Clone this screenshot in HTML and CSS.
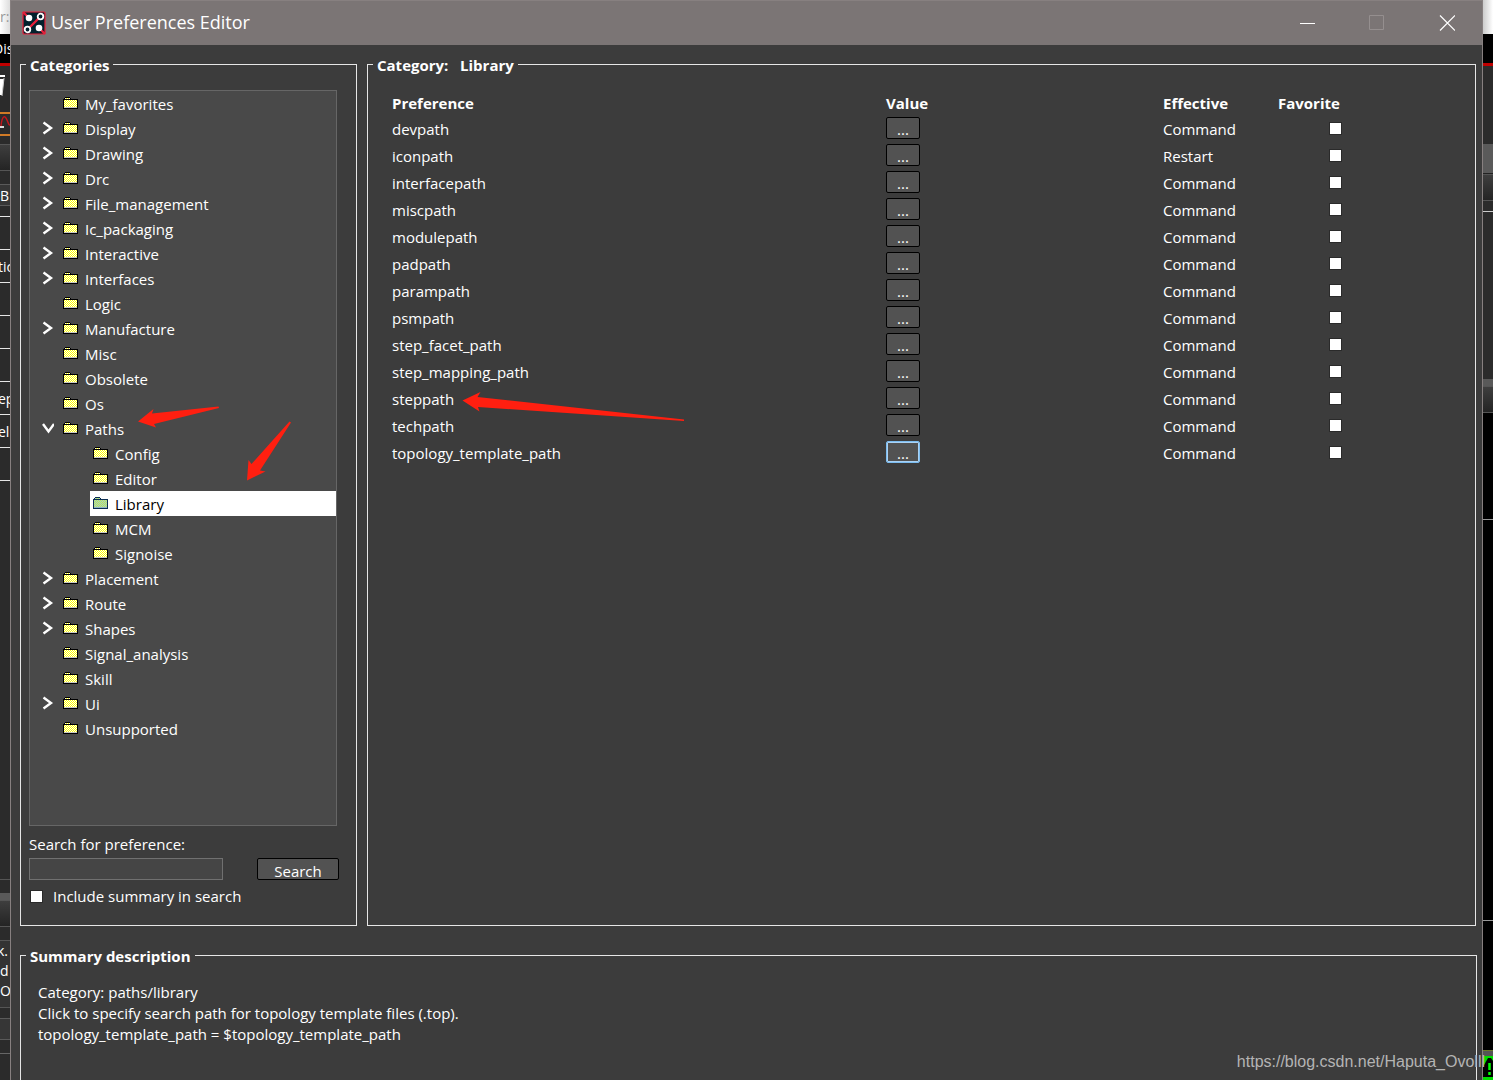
FILE: index.html
```html
<!DOCTYPE html>
<html lang="en">
<head>
<meta charset="utf-8">
<title>User Preferences Editor</title>
<link rel="stylesheet" href="styles.css">
</head>
<body>
<svg class="defs" width="0" height="0" aria-hidden="true">
  <defs>
    <pattern id="dither" width="2" height="2" patternUnits="userSpaceOnUse">
      <rect width="2" height="2" fill="#fff"/><rect width="1" height="1" fill="#ff0"/><rect x="1" y="1" width="1" height="1" fill="#ff0"/>
    </pattern>
    <pattern id="dither-sel" width="2" height="2" patternUnits="userSpaceOnUse">
      <rect width="2" height="2" fill="#a0d0d0"/><rect width="1" height="1" fill="#c4e84c"/><rect x="1" y="1" width="1" height="1" fill="#c4e84c"/>
    </pattern>
    <symbol id="folder" viewBox="0 0 15 12">
      <path d="M2 0h5v1h1v1h7v10H0V2h1V1h1z" fill="#000"/>
      <path d="M2 1h5v1H2zM1 3h13v7H1z" fill="url(#dither)"/>
      <path d="M1 10h13v1H1z" fill="#c8c8c8"/>
    </symbol>
    <symbol id="folder-sel" viewBox="0 0 15 12">
      <path d="M2 0h5v1h1v1h7v10H0V2h1V1h1z" fill="#0b2e52"/>
      <path d="M2 1h5v1H2zM1 3h13v7H1z" fill="url(#dither-sel)"/>
      <path d="M1 10h13v1H1z" fill="#8fb4c8"/>
    </symbol>
    <symbol id="closed" viewBox="0 0 12 14">
      <path d="M1.500 1.500L9 7L1.500 12.500" fill="none" stroke="#fff" stroke-width="2.400"/>
    </symbol>
    <symbol id="open" viewBox="0 0 12 14">
      <path d="M1 3L6.500 10.500L12 3" fill="none" stroke="#fff" stroke-width="2.400"/>
    </symbol>
  </defs>
</svg>
<div class="screen">
  <div class="backdrop left" aria-hidden="true">
    <div class="strip caption">r:</div>
    <div class="strip menubar">Dis</div>
    <div class="strip red"></div>
    <div class="strip toolbar">
      <svg width="10" height="46" viewBox="0 0 10 46"><path d="M0 9h5v2H0zM0 13h4L2 29H0" fill="#fff"/><path d="M4 12L2 30" stroke="#ccc" stroke-width="1"/></svg>
    </div>
    <div class="strip selected">
      <svg width="10" height="20" viewBox="0 0 10 20"><path d="M0 13h4" stroke="#ddd" stroke-width="2"/><path d="M1 12C2 1 5 1 7 6S9 11 10 11" fill="none" stroke="#c4161c" stroke-width="1.500"/></svg>
    </div>
    <div class="strip gap8"></div>
    <div class="strip bar"></div>
    <div class="strip gap13"></div>
    <div class="strip box">B</div>
    <div class="strip gap10"></div>
    <div class="strip cell"></div>
    <div class="strip cell">tic</div>
    <div class="strip cell"></div>
    <div class="strip cell"></div>
    <div class="strip cell"></div>
    <div class="strip cell">ep</div>
    <div class="strip cell">eli</div>
    <div class="strip cell"></div>
    <div class="strip cell grow"></div>
    <div class="strip lower"></div>
    <div class="strip divider"></div>
    <div class="strip bar"></div>
    <div class="strip gap13"></div>
    <div class="strip log">k.<br>d t<br>OI</div>
    <div class="strip gap10"></div>
    <div class="strip box"></div>
    <div class="strip gap13"></div>
    <div class="strip status"></div>
  </div>

  <main class="dialog">
    <header class="titlebar">
      <svg class="logo" width="24" height="24" viewBox="0 0 24 24" aria-hidden="true">
        <rect x="1" y="1" width="22" height="22" rx="1" fill="#02212d" stroke="#e8203a" stroke-width="1.200"/>
        <path d="M1 1L7 7M6 18L18 6M17 17L23 23" stroke="#e8203a" stroke-width="2.400"/>
        <circle cx="7" cy="7" r="3.300" fill="#fff"/><circle cx="17" cy="17" r="3.300" fill="#fff"/>
        <circle cx="18.500" cy="5.500" r="2.800" fill="#02212d" stroke="#fff" stroke-width="1.800"/>
        <circle cx="5.500" cy="18.500" r="2.800" fill="#02212d" stroke="#fff" stroke-width="1.800"/>
      </svg>
      <h1>User Preferences Editor</h1>
      <button class="winbtn" aria-label="Minimize"><svg width="16" height="16" viewBox="0 0 16 16"><path d="M1 8.500h15" stroke="#fff"/></svg></button>
      <button class="winbtn" aria-label="Maximize" disabled><svg width="16" height="16" viewBox="0 0 16 16"><path d="M.5 .5h14v14H.5z" fill="none" stroke="#958f8f"/></svg></button>
      <button class="winbtn" aria-label="Close"><svg width="16" height="16" viewBox="0 0 16 16"><path d="M1 .5l15 15M16 .5l-15 15" stroke="#fff" stroke-width="1.200"/></svg></button>
    </header>

    <div class="content">
      <div class="panels">
        <fieldset class="group categories">
          <legend>Categories</legend>
          <ul class="tree">
            <li><div class="row"><span class="toggle"></span><span class="item"><svg class="folder"><use href="#folder"/></svg>My_favorites</span></div></li>
            <li><div class="row"><button class="toggle" aria-label="Expand Display"><svg><use href="#closed"/></svg></button><span class="item"><svg class="folder"><use href="#folder"/></svg>Display</span></div></li>
            <li><div class="row"><button class="toggle" aria-label="Expand Drawing"><svg><use href="#closed"/></svg></button><span class="item"><svg class="folder"><use href="#folder"/></svg>Drawing</span></div></li>
            <li><div class="row"><button class="toggle" aria-label="Expand Drc"><svg><use href="#closed"/></svg></button><span class="item"><svg class="folder"><use href="#folder"/></svg>Drc</span></div></li>
            <li><div class="row"><button class="toggle" aria-label="Expand File_management"><svg><use href="#closed"/></svg></button><span class="item"><svg class="folder"><use href="#folder"/></svg>File_management</span></div></li>
            <li><div class="row"><button class="toggle" aria-label="Expand Ic_packaging"><svg><use href="#closed"/></svg></button><span class="item"><svg class="folder"><use href="#folder"/></svg>Ic_packaging</span></div></li>
            <li><div class="row"><button class="toggle" aria-label="Expand Interactive"><svg><use href="#closed"/></svg></button><span class="item"><svg class="folder"><use href="#folder"/></svg>Interactive</span></div></li>
            <li><div class="row"><button class="toggle" aria-label="Expand Interfaces"><svg><use href="#closed"/></svg></button><span class="item"><svg class="folder"><use href="#folder"/></svg>Interfaces</span></div></li>
            <li><div class="row"><span class="toggle"></span><span class="item"><svg class="folder"><use href="#folder"/></svg>Logic</span></div></li>
            <li><div class="row"><button class="toggle" aria-label="Expand Manufacture"><svg><use href="#closed"/></svg></button><span class="item"><svg class="folder"><use href="#folder"/></svg>Manufacture</span></div></li>
            <li><div class="row"><span class="toggle"></span><span class="item"><svg class="folder"><use href="#folder"/></svg>Misc</span></div></li>
            <li><div class="row"><span class="toggle"></span><span class="item"><svg class="folder"><use href="#folder"/></svg>Obsolete</span></div></li>
            <li><div class="row"><span class="toggle"></span><span class="item"><svg class="folder"><use href="#folder"/></svg>Os</span></div></li>
            <li><div class="row"><button class="toggle" aria-label="Collapse Paths"><svg><use href="#open"/></svg></button><span class="item"><svg class="folder"><use href="#folder"/></svg>Paths</span></div>
              <ul class="children">
                <li><div class="row"><span class="item"><svg class="folder"><use href="#folder"/></svg>Config</span></div></li>
                <li><div class="row"><span class="item"><svg class="folder"><use href="#folder"/></svg>Editor</span></div></li>
                <li><div class="row current"><span class="item"><svg class="folder"><use href="#folder-sel"/></svg>Library</span></div></li>
                <li><div class="row"><span class="item"><svg class="folder"><use href="#folder"/></svg>MCM</span></div></li>
                <li><div class="row"><span class="item"><svg class="folder"><use href="#folder"/></svg>Signoise</span></div></li>
              </ul>
            </li>
            <li><div class="row"><button class="toggle" aria-label="Expand Placement"><svg><use href="#closed"/></svg></button><span class="item"><svg class="folder"><use href="#folder"/></svg>Placement</span></div></li>
            <li><div class="row"><button class="toggle" aria-label="Expand Route"><svg><use href="#closed"/></svg></button><span class="item"><svg class="folder"><use href="#folder"/></svg>Route</span></div></li>
            <li><div class="row"><button class="toggle" aria-label="Expand Shapes"><svg><use href="#closed"/></svg></button><span class="item"><svg class="folder"><use href="#folder"/></svg>Shapes</span></div></li>
            <li><div class="row"><span class="toggle"></span><span class="item"><svg class="folder"><use href="#folder"/></svg>Signal_analysis</span></div></li>
            <li><div class="row"><span class="toggle"></span><span class="item"><svg class="folder"><use href="#folder"/></svg>Skill</span></div></li>
            <li><div class="row"><button class="toggle" aria-label="Expand Ui"><svg><use href="#closed"/></svg></button><span class="item"><svg class="folder"><use href="#folder"/></svg>Ui</span></div></li>
            <li><div class="row"><span class="toggle"></span><span class="item"><svg class="folder"><use href="#folder"/></svg>Unsupported</span></div></li>
          </ul>
          <label class="search-label" for="search">Search for preference:</label>
          <div class="search-row">
            <input type="text" id="search">
            <button class="btn search-btn">Search</button>
          </div>
          <label class="include"><input type="checkbox">Include summary in search</label>
        </fieldset>

        <fieldset class="group library">
          <legend>Category: &nbsp; Library</legend>
          <table>
            <thead>
              <tr><th class="pref">Preference</th><th class="value">Value</th><th class="effective">Effective</th><th class="favorite">Favorite</th></tr>
            </thead>
            <tbody>
              <tr><td>devpath</td><td class="val"><button class="btn more">...</button></td><td>Command</td><td class="fav"><input type="checkbox" aria-label="Favorite devpath"></td></tr>
              <tr><td>iconpath</td><td class="val"><button class="btn more">...</button></td><td>Restart</td><td class="fav"><input type="checkbox" aria-label="Favorite iconpath"></td></tr>
              <tr><td>interfacepath</td><td class="val"><button class="btn more">...</button></td><td>Command</td><td class="fav"><input type="checkbox" aria-label="Favorite interfacepath"></td></tr>
              <tr><td>miscpath</td><td class="val"><button class="btn more">...</button></td><td>Command</td><td class="fav"><input type="checkbox" aria-label="Favorite miscpath"></td></tr>
              <tr><td>modulepath</td><td class="val"><button class="btn more">...</button></td><td>Command</td><td class="fav"><input type="checkbox" aria-label="Favorite modulepath"></td></tr>
              <tr><td>padpath</td><td class="val"><button class="btn more">...</button></td><td>Command</td><td class="fav"><input type="checkbox" aria-label="Favorite padpath"></td></tr>
              <tr><td>parampath</td><td class="val"><button class="btn more">...</button></td><td>Command</td><td class="fav"><input type="checkbox" aria-label="Favorite parampath"></td></tr>
              <tr><td>psmpath</td><td class="val"><button class="btn more">...</button></td><td>Command</td><td class="fav"><input type="checkbox" aria-label="Favorite psmpath"></td></tr>
              <tr><td>step_facet_path</td><td class="val"><button class="btn more">...</button></td><td>Command</td><td class="fav"><input type="checkbox" aria-label="Favorite step_facet_path"></td></tr>
              <tr><td>step_mapping_path</td><td class="val"><button class="btn more">...</button></td><td>Command</td><td class="fav"><input type="checkbox" aria-label="Favorite step_mapping_path"></td></tr>
              <tr><td>steppath</td><td class="val"><button class="btn more">...</button></td><td>Command</td><td class="fav"><input type="checkbox" aria-label="Favorite steppath"></td></tr>
              <tr><td>techpath</td><td class="val"><button class="btn more">...</button></td><td>Command</td><td class="fav"><input type="checkbox" aria-label="Favorite techpath"></td></tr>
              <tr><td>topology_template_path</td><td class="val"><button class="btn more active">...</button></td><td>Command</td><td class="fav"><input type="checkbox" aria-label="Favorite topology_template_path"></td></tr>
            </tbody>
          </table>
        </fieldset>
      </div>

      <fieldset class="group summary">
        <legend>Summary description</legend>
        <p>Category: paths/library<br>Click to specify search path for topology template files (.top).<br>topology_template_path = $topology_template_path</p>
      </fieldset>
    </div>
  </main>

  <div class="backdrop right" aria-hidden="true">
    <div class="strip caption"></div>
    <div class="strip menubar"></div>
    <div class="strip red"></div>
    <div class="strip side-top"></div>
    <div class="strip side-tab"></div>
    <div class="strip bar"></div>
    <div class="strip gap10"></div>
    <div class="strip side-panel"></div>
    <div class="strip divider"></div>
    <div class="strip bar"></div>
    <div class="strip canvas short"></div>
    <div class="strip canvas"></div>
    <div class="strip canvas last"></div>
    <div class="strip rule"></div>
    <div class="strip alert"><svg width="10" height="24" viewBox="0 0 10 24"><path d="M0 21V11L5 2h3l2 3v16z" fill="#000"/><path d="M6.500 7v7M6.500 16v3" stroke="#0f0" stroke-width="2.500"/></svg></div>
  </div>

  <svg class="marks" width="1493" height="1080" viewBox="0 0 1493 1080" aria-hidden="true">
    <g fill="#ff1f10">
      <path d="M138 421.500L153.500 409L152 413.500L218.500 406.500L219 408L154 424L156 427.500z"/>
      <path d="M247 480.500L248.500 460L251.500 464L289.500 421.500L291 422.500L260 470.500L265.500 471.500z"/>
      <path d="M462.500 400.500L480.500 392L477.500 397L684 419.500V421L478 407L479.500 411.500z"/>
    </g>
  </svg>
  <div class="watermark">https://blog.csdn.net/Haputa_Ovolll</div>
</div>
</body>
</html>
```
FILE: styles.css
```css
* { box-sizing: border-box; }

body {
  margin: 0;
  background: #2b2b2b;
  color: #fff;
  font: 15px/21px "Open Sans", "Noto Sans", sans-serif;
}

button, input { font: inherit; color: inherit; }
button { padding: 0; }

.defs { position: absolute; }

.screen {
  position: relative;
  display: flex;
  min-height: 100vh;
  overflow: hidden;
}

/* Application window showing on both sides of the dialog */
.backdrop {
  flex: none;
  width: 10px;
  display: flex;
  flex-direction: column;
  overflow: hidden;
  font-size: 14px;
}
.strip { flex: none; white-space: nowrap; overflow: hidden; }
.strip svg { display: block; }
.caption { height: 34px; line-height: 34px; color: #999; background: linear-gradient(90deg, #fff, #ddd); }
.right .caption { background: linear-gradient(90deg, #ccc, #fff); }
.menubar { height: 29px; line-height: 29px; background: #000; text-indent: -7px; }
.red { height: 3px; background: #c00000; }
.toolbar { height: 46px; }
.selected { height: 24px; border: solid #d07a26; border-width: 2px 0; }
.gap8 { height: 8px; }
.gap10 { height: 10px; }
.gap13 { height: 13px; }
.bar {
  height: 27px;
  border: solid #555;
  border-width: 1px 0;
  background: linear-gradient(#3e3e3e, #242424);
}
.box { height: 22px; line-height: 22px; border: solid #5a5a5a; border-width: 1px 0; background: #363636; }
.cell { height: 33px; line-height: 33px; border-top: 1px solid #e6e6e6; text-indent: -2px; }
.cell.grow { flex: 1 0 33px; }
.lower { height: 14px; border-top: 1px solid #555; }
.divider { height: 7px; background: #595959; }
.log { height: 68px; line-height: 20px; border: solid #555; border-width: 1px 0; background: #333; text-indent: -3px; }
.status { height: 27px; border-top: 1px solid #666; }
.side-top { height: 78px; }
.side-tab { height: 30px; background: #5a5a5a; border-bottom: 1px solid #222; }
.side-panel { height: 168px; border-top: 1px solid #ccc; }
.canvas { height: 401px; background: #000; border-bottom: 1px solid #999; }
.canvas.short { height: 107px; }
.canvas.last { flex: 1; border-bottom: 1px solid #6a7a2a; }
.rule { height: 5px; background: #555; }
.alert { height: 24px; background: #0d0; }

/* Dialog */
.dialog {
  flex: 1;
  display: flex;
  flex-direction: column;
  min-width: 0;
  background: #3c3c3c;
  border: solid #878080;
  border-width: 1px 1px 0;
}
.titlebar {
  flex: none;
  display: flex;
  align-items: center;
  height: 44px;
  padding-left: 11px;
  background: #7b7575;
}
h1 {
  flex: 1;
  margin: 0 0 0 5px;
  padding-bottom: 2px;
  font-size: 18px;
  line-height: 24px;
  font-weight: 400;
}
.winbtn {
  display: flex;
  align-items: center;
  justify-content: center;
  width: 70px;
  height: 44px;
  border: 0;
  background: none;
}
.content {
  flex: 1;
  display: flex;
  flex-direction: column;
  gap: 20px;
  padding: 10px 5px 0 9px;
}
.panels { flex: 1; display: flex; gap: 10px; }

.group {
  margin: 0;
  min-width: 0;
  border: 1px solid #e6e6e6;
}
legend {
  height: 19px;
  margin-left: -3px;
  padding: 0 4px;
  line-height: 20px;
  font-weight: 700;
}

.categories {
  flex: none;
  display: flex;
  flex-direction: column;
  width: 337px;
  padding: 16px 17px 18px 8px;
}
.tree {
  flex: 1;
  margin: 0 2px 0 0;
  padding: 0;
  border: 1px solid #666;
  background: #494949;
  list-style: none;
}
.children { margin: 0; padding: 0 0 0 60px; list-style: none; }
.row { display: flex; height: 25px; line-height: 27px; }
.toggle { width: 30px; height: 25px; border: 0; background: none; }
.toggle svg { display: block; width: 12px; height: 14px; margin: 0 0 2px 12px; }
.item { display: flex; align-items: flex-start; gap: 7px; padding-left: 3px; }
.folder { width: 15px; height: 12px; margin-top: 6px; shape-rendering: crispEdges; }
.current { background: #fff; color: #000; }

.search-label { margin-top: 8px; }
.search-row { display: flex; justify-content: space-between; margin-top: 3px; }
input[type="text"] {
  width: 194px;
  height: 22px;
  border: 1px solid #707070;
  background: #454545;
}
.btn {
  border: 1px solid #000;
  border-radius: 2px;
  background: #525252;
}
.search-btn { width: 82px; height: 22px; padding-top: 2px; line-height: 20px; }
.include { display: flex; align-items: center; gap: 10px; margin-top: 6px; }
input[type="checkbox"] {
  appearance: none;
  display: block;
  width: 13px;
  height: 13px;
  margin: 0;
  border: 1px solid #2a2a2a;
  background: #fff;
}
.include input { margin-left: 1px; }

.library {
  flex: 1;
  padding: 16px 0 0 24px;
  margin-right: 1px;
}
.library legend { margin-left: -19px; }
table { width: 100%; table-layout: fixed; border-collapse: collapse; }
th, td { height: 27px; padding: 2px 0 0; text-align: left; }
th { height: 25px; font-weight: 700; }
.value { width: 277px; }
.effective { width: 115px; }
.favorite { width: 197px; }
.val { padding: 0 0 2px; }
.fav { padding: 0 0 0 51px; }
.more { display: block; width: 34px; height: 22px; padding-top: 2px; line-height: 18px; }
.more.active { border-color: #7dbdf0; box-shadow: inset 0 0 0 1px #a9d2f5; }

.summary {
  min-height: 134px;
  padding: 17px;
  border-bottom: 0;
}
.summary legend { margin-left: -12px; }
.summary p { margin: 0; }

/* Drawn over the window */
.marks { position: absolute; top: 0; left: 0; }
.watermark {
  position: absolute;
  right: 8px;
  bottom: 7px;
  color: #b4b4b4;
  font: 16px/22px "Liberation Sans", Arial, sans-serif;
}
```
